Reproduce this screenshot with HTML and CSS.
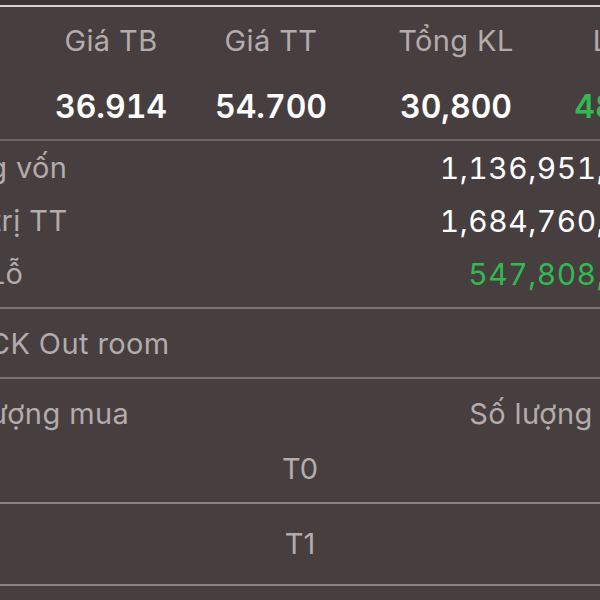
FILE: index.html
```html
<!DOCTYPE html>
<html lang="vi">
<head>
    <meta charset="UTF-8">
    <meta name="viewport" content="width=device-width, initial-scale=1.0">
    <title>Danh mục</title>
    <link rel="stylesheet" href="styles.css">
</head>
<body>
    <div class="top-bar"></div>

    <div class="summary">
        <div class="summary-head">
            <span>Giá TB</span>
            <span>Giá TT</span>
            <span>Tổng KL</span>
            <span>Lãi/Lỗ</span>
        </div>
        <div class="summary-values">
            <span>36.914</span>
            <span>54.700</span>
            <span>30,800</span>
            <span class="up">48.17%</span>
        </div>
    </div>

    <div class="totals">
        <div class="row">
            <span class="label">Tổng vốn</span>
            <span class="value">1,136,951,200</span>
        </div>
        <div class="row">
            <span class="label">Giá trị TT</span>
            <span class="value">1,684,760,000</span>
        </div>
        <div class="row">
            <span class="label">Lãi/Lỗ</span>
            <span class="value up">547,808,800</span>
        </div>
    </div>

    <div class="room">
        <div class="row">
            <span class="label">Mã CK Out room</span>
        </div>
    </div>

    <div class="settle">
        <div class="row settle-head">
            <span class="label">Số lượng mua</span>
            <span class="label">Số lượng bán</span>
        </div>
        <div class="settle-day">T0</div>
    </div>

    <div class="settle settle-last">
        <div class="settle-day">T1</div>
    </div>
</body>
</html>
```

FILE: styles.css
```css
body {
    margin: 0;
    padding: 0;
    background-color: #473e3f;
    font-family: Inter, "Noto Sans", sans-serif;
    overflow: hidden;
}

.top-bar {
    height: 5px;
    background-color: #3c3334;
    border-bottom: 2px solid #d6d1d1;
}

/* Average price / market price / volume block */
.summary {
    height: 134px;
    padding-top: 10px;
    box-sizing: border-box;
    border-bottom: 2px solid #6d6566;
}

.summary-head,
.summary-values {
    display: grid;
    grid-template-columns: 162px 158px 212px 148px;
    margin-left: 30px;
    text-align: center;
    white-space: nowrap;
}

.summary-head {
    line-height: 48px;
    font-size: 29px;
    letter-spacing: 0.4px;
    color: #b2acac;
}

.summary-values {
    margin-top: 16px;
    line-height: 52px;
    font-size: 32px;
    font-weight: 600;
    font-variant-numeric: tabular-nums;
    color: #fff;
}

.row {
    display: flex;
    justify-content: space-between;
    margin: 0 -54px 0 -63px;
    white-space: nowrap;
}

.label {
    font-size: 29px;
    letter-spacing: 0.4px;
    color: #b2acac;
}

.value {
    font-size: 30px;
    letter-spacing: 0.5px;
    font-variant-numeric: tabular-nums;
    color: #fff;
}

.up,
.value.up {
    color: #31b952;
}

.totals {
    padding-bottom: 7px;
    border-bottom: 2px solid #7a7273;
}

.totals .row {
    height: 53px;
    margin-right: -65px;
    align-items: center;
}

.room {
    border-bottom: 2px solid #7a7273;
}

.room .row {
    height: 68px;
    align-items: center;
}

.settle {
    padding-top: 6px;
    padding-bottom: 5px;
    border-bottom: 2px solid #8a8283;
}

.settle-head {
    height: 56px;
    align-items: center;
}

.settle-day {
    line-height: 56px;
    text-align: center;
    font-size: 29px;
    color: #b2acac;
}

.settle-last {
    padding-top: 12px;
    padding-bottom: 12px;
}
```
